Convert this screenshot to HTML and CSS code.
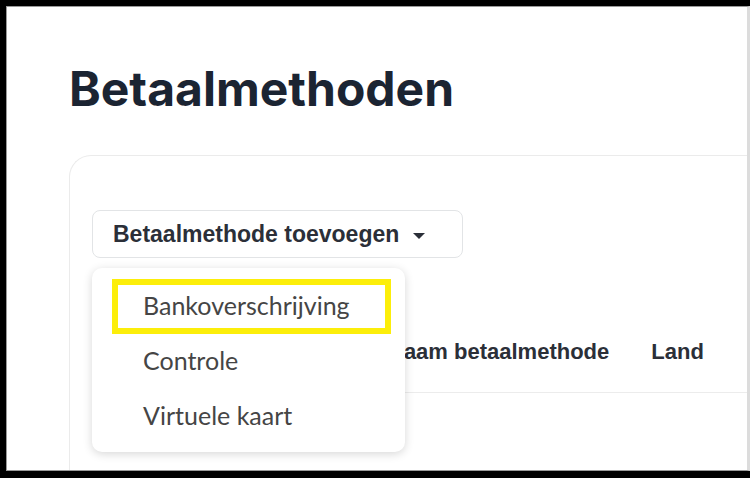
FILE: index.html
```html
<!DOCTYPE html>
<html lang="en">
    <head>
        <meta charset="UTF-8">
        <title>Betaalmethoden</title>
        <link rel="stylesheet" href="styles.css">
    </head>
    <body>
        <div class="screen">
            <h1>Betaalmethoden</h1>
            <div class="card">
                <div class="add-wrap">
                    <button class="add-btn">Betaalmethode toevoegen <span class="caret"></span></button>
                    <ul class="menu">
                        <li class="item highlight">Bankoverschrijving</li>
                        <li class="item">Controle</li>
                        <li class="item">Virtuele kaart</li>
                    </ul>
                </div>
                <div class="table-head">
                    <span class="cell spacer"></span>
                    <span class="cell">Naam betaalmethode</span>
                    <span class="cell">Land</span>
                    <span class="cell"></span>
                </div>
            </div>
        </div>
    </body>
</html>
```

FILE: styles.css
```css
* {
    box-sizing: border-box;
}

body {
    margin: 0;
    background: #000;
    height: 478px;
    overflow: hidden;
}

.screen {
    margin: 6px 0 0 6px;
    height: 465px;
    background: #fff;
    border-top: 1px solid #9a9a9a;
    border-left: 1px solid #9a9a9a;
    border-bottom: 1px solid #9a9a9a;
    border-right: 3px solid #dcdcdc;
    padding: 0 0 0 62px;
    overflow: hidden;
}

h1 {
    font-family: Inter, "Liberation Sans", sans-serif;
    font-weight: 700;
    font-size: 48px;
    color: #1b2432;
    margin: 54px 0 38px 0;
    line-height: 56px;
}

.card {
    border: 1px solid #ebebeb;
    border-right: none;
    border-radius: 22px 0 0 0;
    height: 400px;
    padding: 54px 0 0 22px;
}

.add-wrap {
    position: relative;
}

.add-btn {
    font-family: "Liberation Sans", Arial, sans-serif;
    font-weight: 700;
    font-size: 23px;
    color: #2b2f38;
    background: #fff;
    border: 1px solid #e2e4e6;
    border-radius: 8px;
    width: 371px;
    height: 48px;
    padding: 0 0 0 20px;
    text-align: left;
    display: flex;
    align-items: center;
    cursor: pointer;
}

.caret {
    display: inline-block;
    margin-left: 14px;
    margin-top: 3px;
    border-left: 6px solid transparent;
    border-right: 6px solid transparent;
    border-top: 6px solid #2b2f38;
}

.menu {
    position: absolute;
    top: 58px;
    left: 0;
    z-index: 2;
    width: 313px;
    margin: 0;
    padding: 11px 14px 8px 20px;
    list-style: none;
    background: #fff;
    border-radius: 10px;
    box-shadow: 0 2px 10px rgba(0, 0, 0, 0.16);
}

.item {
    font-family: Lato, "Open Sans", sans-serif;
    font-size: 25px;
    color: #454545;
    height: 55px;
    display: flex;
    align-items: center;
    padding: 0 0 4px 25px;
    border: 6px solid transparent;
}

.highlight {
    border-color: #fcee0a;
}

.table-head {
    display: flex;
    margin-top: 53px;
    height: 82px;
    align-items: center;
    border-bottom: 1px solid #ececec;
    font-family: "Liberation Sans", Arial, sans-serif;
    font-weight: 700;
    font-size: 22px;
    color: #2b2f38;
}

.cell {
    flex-shrink: 0;
    padding: 0 21px;
    white-space: nowrap;
}

.spacer {
    width: 275px;
    padding: 0;
}
```
